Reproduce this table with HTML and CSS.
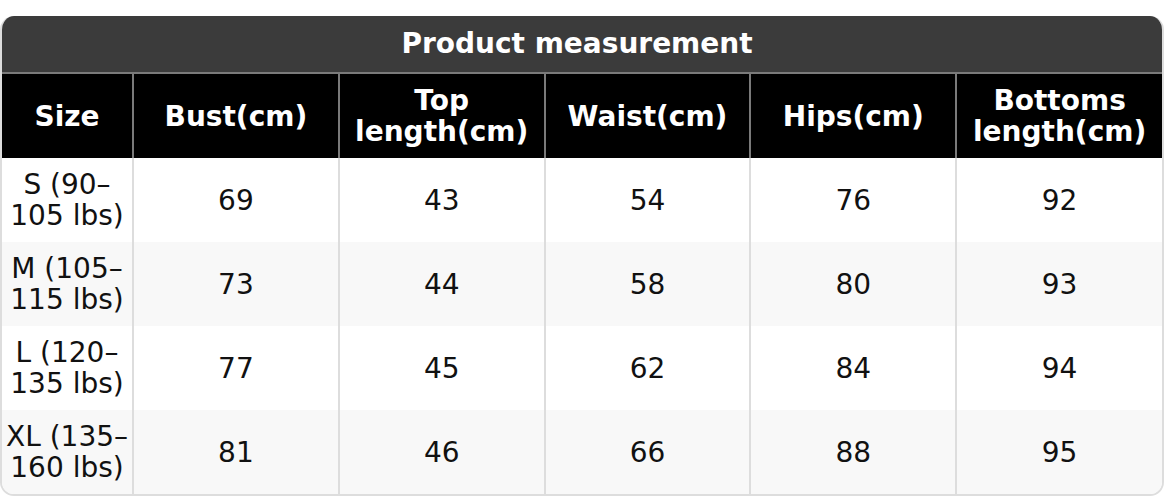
FILE: index.html
```html
<!DOCTYPE html>
<html>
<head>
<meta charset="utf-8">
<link rel="stylesheet" href="styles.css">
</head>
<body>
<div class="card">
  <div class="title">Product measurement</div>
  <table class="sizes">
    <colgroup>
      <col class="c-size">
      <col><col><col><col><col>
    </colgroup>
    <thead>
      <tr>
        <th>Size</th>
        <th>Bust(cm)</th>
        <th>Top length(cm)</th>
        <th>Waist(cm)</th>
        <th>Hips(cm)</th>
        <th>Bottoms length(cm)</th>
      </tr>
    </thead>
    <tbody>
      <tr><td>S (90–105 lbs)</td><td>69</td><td>43</td><td>54</td><td>76</td><td>92</td></tr>
      <tr><td>M (105–115 lbs)</td><td>73</td><td>44</td><td>58</td><td>80</td><td>93</td></tr>
      <tr><td>L (120–135 lbs)</td><td>77</td><td>45</td><td>62</td><td>84</td><td>94</td></tr>
      <tr><td>XL (135–160 lbs)</td><td>81</td><td>46</td><td>66</td><td>88</td><td>95</td></tr>
    </tbody>
  </table>
</div>
</body>
</html>
```
FILE: styles.css
```css
html, body {
  margin: 0;
  padding: 0;
  background: #ffffff;
}
body {
  padding-top: 16px;
  font-family: "DejaVu Sans", sans-serif;
}
.card {
  width: 1164px;
  box-sizing: border-box;
  border: 2px solid #dddddd;
  border-top: none;
  border-radius: 14px;
  overflow: hidden;
}
.title {
  background: #3b3b3b;
  color: #ffffff;
  font-weight: bold;
  font-size: 28px;
  height: 56px;
  line-height: 56px;
  padding-right: 10px;
  text-align: center;
  border-bottom: 2px solid #7a7a7a;
}
.sizes {
  width: 100%;
  border-collapse: collapse;
  table-layout: fixed;
}
.c-size {
  width: 131px;
}
.sizes th {
  background: #000000;
  color: #ffffff;
  font-weight: bold;
  font-size: 28px;
  line-height: 31px;
  height: 84px;
  padding: 0 4px;
  border-left: 2px solid #7a7a7a;
  text-align: center;
  vertical-align: middle;
}
.sizes th:first-child,
.sizes td:first-child {
  border-left: none;
}
.sizes td {
  font-size: 28px;
  line-height: 31px;
  height: 84px;
  padding: 0 2px;
  color: #111111;
  border-left: 2px solid #dddddd;
  text-align: center;
  vertical-align: middle;
}
.sizes tbody tr:nth-child(even) td {
  background: #f8f8f8;
}
```
